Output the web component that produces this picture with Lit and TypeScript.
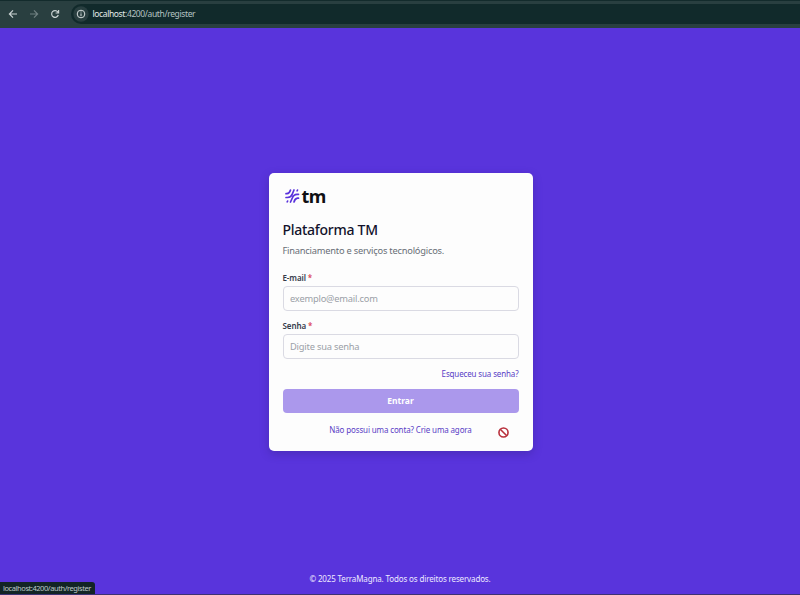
import { LitElement, html, css } from "lit";
import { customElement } from "lit/decorators.js";

@customElement("browser-bar")
class BrowserBar extends LitElement {
  static styles = css`
    :host {
      display: flex;
      box-sizing: border-box;
      height: 28px;
      align-items: center;
      background: #293f40;
      border-top: 1px solid #132b2c;
      padding: 3px 0 4px 8px;
    }
    .nav {
      width: 10px;
      height: 10px;
      margin-right: 11px;
      flex: none;
      fill: none;
      stroke: #c9d3d2;
      stroke-width: 1.2;
    }
    .off {
      stroke: #708181;
    }
    .address {
      flex: 1;
      height: 20px;
      display: flex;
      align-items: center;
      background: #112a2b;
      border-radius: 10px 0 0 10px;
      padding-left: 2px;
    }
    .info {
      width: 16px;
      height: 16px;
      margin-right: 3.5px;
    }
    .url {
      font: 8.5px/12px "Noto Sans", sans-serif;
      color: #b5c3c2;
      white-space: nowrap;
      letter-spacing: -0.38px;
    }
    .host {
      color: #e3eae9;
    }
  `;
  render() {
    return html`
      <svg class="nav" viewBox="0 0 10 10"><path d="M9 5H1.5M5 1.4 1.4 5 5 8.6" /></svg>
      <svg class="nav off" viewBox="0 0 10 10"><path d="M1 5H8.500M5 1.400 8.600 5 5 8.600" /></svg>
      <svg class="nav reload" viewBox="0 0 10 10"><path d="M8.300 6A3.400 3.400 0 1 1 7.800 2.900L8.500 3.700M8.600 1V4H5.600" /></svg>
      <div class="address">
        <svg class="info" viewBox="0 0 16 16">
          <circle cx="8" cy="8" r="7.700" fill="#293f40" />
          <circle cx="8" cy="8" r="3.800" fill="none" stroke="#d5dddc" />
          <path d="M8 7.400V10.200M8 5.500V6.500" stroke="#d5dddc" />
        </svg>
        <span class="url"><span class="host">localhost</span>:4200/auth/register</span>
      </div>
    `;
  }
}

@customElement("form-field")
class FormField extends LitElement {
  static properties = { label: {}, hint: {} };
  declare label: string;
  declare hint: string;
  static styles = css`
    :host {
      display: block;
      font-family: "Noto Sans", sans-serif;
    }
    .label {
      height: 12px;
      font-size: 8px;
      line-height: 12px;
      font-weight: 600;
      color: #353b4a;
      margin-bottom: 2px;
      letter-spacing: -0.1px;
    }
    .star {
      color: #d8344c;
      font-weight: 500;
    }
    .input {
      height: 25px;
      box-sizing: border-box;
      border: 1px solid #dadae3;
      border-radius: 4px;
      padding: 0 6.5px;
      line-height: 23px;
      font-size: 9.3px;
      letter-spacing: -0.2px;
      color: #9b9fa7;
    }
  `;
  render() {
    return html`
      <div class="label">${this.label} <span class="star">*</span></div>
      <div class="input">${this.hint}</div>
    `;
  }
}

@customElement("app-root")
class AppRoot extends LitElement {
  static styles = css`
    :host {
      display: flex;
      flex-direction: column;
      position: relative;
      box-sizing: border-box;
      height: 595px;
      background: #5934dc;
      border-bottom: 1px solid #3d3273;
      font-family: "Noto Sans", sans-serif;
      white-space: nowrap;
      overflow: hidden;
    }
    .main {
      flex: 1;
      display: flex;
      justify-content: center;
      align-items: flex-start;
      padding: 144.6px 0 0 1px;
    }
    .card {
      position: relative;
      box-sizing: border-box;
      width: 264px;
      height: 278px;
      padding: 14.4px 14px 14px;
      background: #fdfdfd;
      border-radius: 5px;
      box-shadow: 0 3px 8px #34218866;
    }
    .brand {
      display: flex;
      align-items: center;
      height: 20px;
    }
    .logo {
      display: block;
      width: 18px;
      height: 19px;
      margin-right: 1px;
      position: relative;
      top: -1px;
    }
    .name {
      font-size: 18px;
      line-height: 20px;
      font-weight: 700;
      letter-spacing: -0.6px;
      color: #101014;
      position: relative;
      top: -1px;
    }
    .title {
      margin: 13px 0 0;
      font-size: 14px;
      line-height: 20px;
      font-weight: 500;
      letter-spacing: -0.27px;
      color: #12122b;
    }
    .subtitle {
      margin: 4px 0 13.6px;
      font-size: 9.3px;
      line-height: 14px;
      letter-spacing: -0.22px;
      color: #686d76;
    }
    .second {
      margin-top: 9.4px;
    }
    .link {
      color: #5a3dc6;
      font-size: 8px;
      line-height: 12px;
      letter-spacing: -0.14px;
    }
    .forgot {
      margin-top: 9px;
      text-align: right;
    }
    .submit {
      margin-top: 9.5px;
      height: 24px;
      border-radius: 4px;
      background: #ab98ec;
      color: #fff;
      font-size: 8.5px;
      font-weight: 700;
      line-height: 24px;
      text-align: center;
    }
    .signup {
      margin-top: 11px;
      text-align: center;
    }
    .blocked {
      position: absolute;
      left: 228px;
      top: 253px;
      width: 13px;
      height: 13px;
    }
    .footer {
      height: 12px;
      padding: 0 0 9px;
      text-align: center;
      font-size: 8px;
      line-height: 12px;
      letter-spacing: -0.14px;
      color: #eeeaff;
    }
    .status {
      position: absolute;
      left: 0;
      bottom: 0;
      width: 92px;
      height: 12px;
      padding-left: 3px;
      border-radius: 0 3px 0 0;
      background: #122425;
      color: #bec9c8;
      font-size: 7.500px;
      line-height: 12px;
      letter-spacing: -0.43px;
    }
  `;
  render() {
    return html`
      <browser-bar></browser-bar>
      <div class="main">
        <div class="card">
          <div class="brand">
            <svg class="logo" viewBox="0 0 18 19">
              <path
                fill="none" stroke="#5932dc" stroke-width="1.700" stroke-linecap="round"
                d="M3 7.700H4Q6.500 7.500 7.500 4M3 11.500H4.500Q8.300 11.200 9.300 8L11 4M15.500 8.300H14Q10.500 8.500 9.300 12L7.500 16M15.500 12.200H14.500Q12 12.500 11 16M14.500 4.100L14.100 4.800M4.200 15.800L4.600 15.100"
              />
            </svg>
            <span class="name">tm</span>
          </div>
          <div class="title">Plataforma TM</div>
          <div class="subtitle">Financiamento e serviços tecnológicos.</div>
          <form-field label="E-mail" hint="exemplo@email.com"></form-field>
          <form-field class="second" label="Senha" hint="Digite sua senha"></form-field>
          <div class="link forgot">Esqueceu sua senha?</div>
          <div class="submit">Entrar</div>
          <div class="link signup">Não possui uma conta? Crie uma agora</div>
          <svg class="blocked" viewBox="0 0 12 12">
            <circle cx="6" cy="6" r="4.200" fill="#fff" stroke="#b8303c" stroke-width="1.500" />
            <path d="M3 3 9 9" stroke="#b8303c" stroke-width="1.500" />
          </svg>
        </div>
      </div>
      <div class="footer">© 2025 TerraMagna. Todos os direitos reservados.</div>
      <div class="status">localhost:4200/auth/register</div>
    `;
  }
}
